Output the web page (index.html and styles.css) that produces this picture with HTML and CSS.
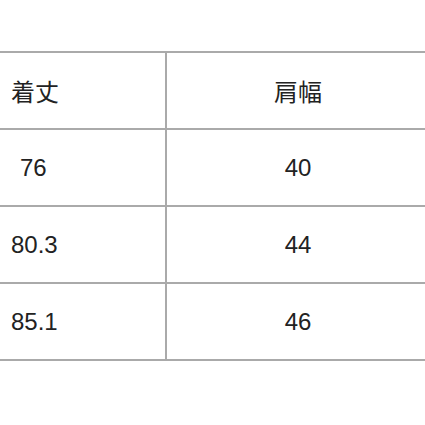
FILE: index.html
```html
<!DOCTYPE html>
<html lang="ja">
<head>
<meta charset="utf-8">
<link rel="stylesheet" href="styles.css">
</head>
<body>
<div class="sheet">
  <div class="row">
    <div class="cell left">着丈</div>
    <div class="cell right">肩幅</div>
  </div>
  <div class="row">
    <div class="cell left indent">76</div>
    <div class="cell right">40</div>
  </div>
  <div class="row">
    <div class="cell left">80.3</div>
    <div class="cell right">44</div>
  </div>
  <div class="row last">
    <div class="cell left">85.1</div>
    <div class="cell right">46</div>
  </div>
</div>
</body>
</html>
```
FILE: styles.css
```css
html, body {
  margin: 0;
  padding: 0;
  background: #ffffff;
}
body {
  width: 425px;
  height: 425px;
  overflow: hidden;
  font-family: "Liberation Sans", "Noto Sans CJK JP", sans-serif;
  color: #222222;
  font-size: 24px;
}
.sheet {
  padding-top: 51px;
}
.row {
  display: grid;
  grid-template-columns: 165px 2px 1fr;
  height: 77px;
  box-sizing: border-box;
  border-top: 2px solid #aaaaaa;
}
.row.last {
  border-bottom: 2px solid #aaaaaa;
  height: 79px;
}
.cell {
  display: flex;
  align-items: center;
}
.left {
  grid-column: 1;
  padding-left: 11px;
  border-right: 2px solid #aaaaaa;
  grid-column-end: 3;
}
.indent {
  padding-left: 20px;
}
.right {
  grid-column: 3;
  justify-content: center;
  padding-left: 4px;
}
```
